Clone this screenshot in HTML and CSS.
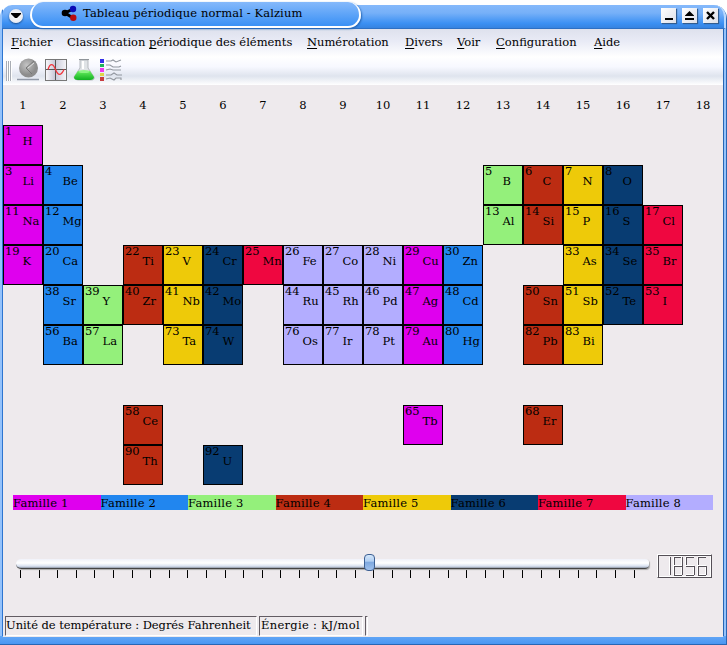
FILE: index.html
```html
<!DOCTYPE html>
<html lang="fr">
<head>
<meta charset="utf-8">
<title>Tableau périodique normal - Kalzium</title>
<link rel="stylesheet" href="styles.css">
</head>
<body>
<div class="window">
  <header class="titlebar">
    <div class="bar"></div>
    <span class="orb"><svg width="10" height="6" viewBox="0 0 10 6"><path d="M0 0h10v1L6 5H4L0 1z"/></svg></span>
    <div class="tab">
      <svg class="logo" width="17" height="17" viewBox="0 0 17 17"><path d="M4 8L12 4M4 8L12 13" stroke="#000" stroke-width="3"/><circle cx="4" cy="8" r="3.300"/><circle cx="12" cy="4" r="3.200" fill="#0a0ab4"/><circle cx="12.300" cy="12.700" r="3.200" fill="#b80c10"/></svg>
      <span class="title">Tableau périodique normal - Kalzium</span>
    </div>
    <div class="controls">
      <span><svg width="15" height="15"><path d="M4 10h8v2H4z"/></svg></span>
      <span><svg width="15" height="15"><path d="M7.500 3L12 7.500V8H3v-.5zM3 10h9v2H3z"/></svg></span>
      <span><svg width="15" height="15"><path d="M4 4l7 7M11 4l-7 7" stroke="#000" stroke-width="2.400"/></svg></span>
    </div>
  </header>
  <nav class="menu">
    <span class="m-file"><u>F</u>ichier</span>
    <span class="m-class">Classification <u>p</u>ériodique des éléments</span>
    <span class="m-num"><u>N</u>umérotation</span>
    <span class="m-div"><u>D</u>ivers</span>
    <span class="m-view"><u>V</u>oir</span>
    <span class="m-conf"><u>C</u>onfiguration</span>
    <span class="m-help"><u>A</u>ide</span>
  </nav>
  <div class="toolbar">
    <i class="grip"></i>
    <svg width="24" height="24" viewBox="0 0 24 24"><defs><radialGradient id="ball" cx=".4" cy=".35"><stop stop-color="#c4c4c4"/><stop offset="1" stop-color="#8d8d8d"/></radialGradient></defs><circle cx="12.500" cy="10" r="9.500" fill="url(#ball)"/><path d="M18 3l-8 7 6 6" fill="none" stroke="#777"/><path d="M18 5l-6 5" stroke="#ddd"/><path d="M1 21.500h22" stroke="#929aa8" stroke-width="1.500"/></svg>
    <svg width="24" height="24" viewBox="0 0 24 24"><defs><linearGradient id="paper"><stop stop-color="#fafafc"/><stop offset=".45" stop-color="#c8c8d8"/><stop offset="1" stop-color="#f6f6fa"/></linearGradient></defs><rect x="1.500" y="1.500" width="21" height="21" fill="url(#paper)" stroke="#777"/><path d="M2 11.500h20M11.500 2v20" stroke="#555"/><path d="M4 11.500C6 5 9 5 11.500 11.500S17 18 20 11.500" fill="none" stroke="#f3343d" stroke-width="1.300"/></svg>
    <svg width="24" height="24" viewBox="0 0 24 24"><defs><linearGradient id="liq" x2="0" y2="1"><stop stop-color="#68ee60"/><stop offset="1" stop-color="#10b020"/></linearGradient></defs><path d="M8 2v8L2 19q0 3 4 3h13q4 0 3-3L16 10V2z" fill="#dfe3e6" stroke="#b5b9be"/><path d="M6 13h12l4 6q0 3-4 3H6q-4 0-4-3z" fill="url(#liq)"/><path d="M7 1.500h10" stroke="#90959a"/><ellipse cx="12" cy="13.500" rx="5.500" ry="1.500" fill="#8cf484"/><path d="M11 3v8" stroke="#fff" stroke-width="2"/></svg>
    <svg width="24" height="24" viewBox="1 0 24 24"><path fill="#3431e8" d="M1 1h4v4H1z"/><path fill="#20b45a" d="M1 6h4v3H1z"/><path fill="#ee38ee" d="M1 10h4v4H1z"/><path fill="#dfd447" d="M1 15h4v3H1z"/><path fill="#c83d40" d="M1 19h4v4H1z"/><path d="M7 3h5l2-1 3 2 5-2M7 7h4l3 2h6l2-1M7 12l4-1 3 1h8M7 17h5l3-2 3 2h5M7 21l4-1 4 2 2-2h5v2" fill="none" stroke="#92979f" stroke-width="1.100"/></svg>
  </div>
  <main class="content">
    <div class="groups" id="groups"></div>
    <div class="table" id="table"></div>
    <div class="legend">
      <span class="f1">Famille 1</span><span class="f2">Famille 2</span><span class="f3">Famille 3</span><span class="f4">Famille 4</span><span class="f5">Famille 5</span><span class="f6">Famille 6</span><span class="f7">Famille 7</span><span class="f8">Famille 8</span>
    </div>
    <div class="range">
      <div class="slider">
        <div class="groove"><i class="knob"></i></div>
        <div class="ticks" id="ticks"></div>
      </div>
      <div class="lcd" id="lcd" role="img" aria-label="1856"></div>
    </div>
  </main>
  <footer class="status">
    <span class="s-temp">Unité de température : Degrés Fahrenheit</span>
    <span class="s-energy">Énergie : kJ/mol</span>
    <span class="s-empty"></span>
  </footer>
</div>
<script src="app.js"></script>
</body>
</html>
```
FILE: styles.css
```css
* { box-sizing: border-box; }
body { margin: 0; background: #fff; color: #000; font: 11.5px/15px "DejaVu Serif", serif; overflow: hidden; }
svg { display: block; flex: none; }
.window { width: 727px; height: 645px; display: flex; flex-direction: column; position: relative; }
.window::before { content: ""; position: absolute; z-index: -1; inset: 5px 0 0; border-radius: 12px 14px 0 0; border: solid #2866b4; border-width: 0 1px 1px 0; background: linear-gradient(#63a7f6, #4a96f2) 0 100% / 100% 8px no-repeat, linear-gradient(90deg, #94c2fb 0 2px, #2d75d0 2px 3px, transparent 3px 723px, #2866b4 723px 724px, #94c2fb 724px); }

.titlebar { height: 29px; position: relative; display: flex; flex: none; }
.bar { position: absolute; z-index: -1; inset: 5px 1px 0 2px; background: linear-gradient(#85b9fb, #76b0f8 35%, #3b90f3 80%, #3683e0); border-bottom: 1px solid #2d70c4; border-radius: 10px 12px 0 0; border-right: 2px solid #b9d9ff; }
.orb { width: 14px; height: 14px; margin: 9px 0 0 9px; border-radius: 50%; background: radial-gradient(#fff, #dce0ea); display: grid; place-items: center; box-shadow: 0 1px 2px #1b4b88; }
.tab { width: 331px; height: 26px; margin: 2px 0 0 7px; border: solid #fff; border-width: 0 2px 2px; border-radius: 14px; background: linear-gradient(#85b9fb, #3990f5); display: flex; align-items: center; padding-left: 29px; box-shadow: 1px 1px 2px #2465b3; }
.logo { margin-top: -1px; }
.title { margin: -2px 0 0 5px; white-space: nowrap; letter-spacing: .11px; }
.controls { margin: 8px 9px 0 auto; display: flex; gap: 6px; }
.controls span { width: 15px; height: 15px; background: linear-gradient(135deg, #fff, #dcdfe8); box-shadow: 1px 1px 1px #315d91; }

.menu { height: 28px; margin: 0 4px 0 3px; padding: 6px 0 0 8px; display: flex; background: linear-gradient(#dee1ed, #e9ebf6 45%, #fff); white-space: nowrap; flex: none; }
.menu u { text-underline-offset: 2px; text-decoration-thickness: 1px; }
.m-file { width: 56px; }
.m-class { width: 240px; }
.m-num { width: 98px; }
.m-div { width: 52px; }
.m-view { width: 39px; }
.m-conf { width: 98px; }
.toolbar { height: 28px; margin: 0 4px 0 3px; padding-left: 3px; display: flex; align-items: center; gap: 4px; background: linear-gradient(#fff, #f7f8ff 35%, #dfe4ee 68%, #fff); flex: none; }
.toolbar svg { margin-top: -2px; }
.grip { width: 6px; height: 20px; background: repeating-linear-gradient(90deg, #a9adb5 0 1px, #fff 1px 2px); }

.content { height: 530px; margin: 0 4px 0 3px; background: #eeeaed; flex: none; }
.groups { height: 40px; padding-top: 13px; display: grid; grid-template-columns: repeat(18, 40px); text-align: center; }
.table { display: grid; grid-template-columns: repeat(18, 40px); grid-template-rows: repeat(9, 40px); }
.cell { border: 1px solid #000; display: flex; flex-direction: column; line-height: 10px; padding: 0 0 0 1px; white-space: nowrap; }
.cell b { font-weight: normal; }
.cell span { margin-left: 17.5px; }
.f1 { background: #df00ee; }
.f2 { background: #2186ef; }
.f3 { background: #94f07b; }
.f4 { background: #bc2c12; }
.f5 { background: #eeca09; }
.f6 { background: #083c72; }
.f7 { background: #ef0740; }
.f8 { background: #b3adff; }
.legend { width: 700px; margin: 10px 0 0 10px; display: grid; grid-template-columns: repeat(8, 1fr); letter-spacing: .2px; }
.legend span { height: 15px; line-height: 16px; }
.range { display: flex; margin: 44px 0 0 13px; }
.slider { width: 633px; padding-top: 5px; }
.groove { height: 10px; border-radius: 5px 4px 4px 5px; background: linear-gradient(#f0f2fa, #fff 45%, #d8e1f1 80%, #8e96a5); border-bottom: 1px solid #444; box-shadow: 1px 1px 1px #aaa; position: relative; }
.knob { position: absolute; left: 348px; top: -5px; width: 11px; height: 17px; border: 1px solid #3c5f93; border-radius: 4px; background: linear-gradient(#d4e7fb, #b2cff2 40%, #7fa9e0 50%, #a0c1ed); }
.ticks { display: flex; justify-content: space-between; width: 615px; margin: 1px 0 0 4px; }
.ticks i { width: 1px; height: 8px; background: #000; }
.lcd { width: 55px; height: 24px; margin-left: 8px; border: 1px solid; border-color: #fff #555057 #555057 #fff; box-shadow: inset 1px 1px #555057, inset -1px -1px #fff; padding: 1px 4px; display: flex; justify-content: flex-end; gap: 2px; }
.digit { width: 10px; height: 20px; display: grid; grid-template: 2px 7px 2px 7px 2px / 2px 6px 2px; }
.digit i { margin: -1px 0; background: linear-gradient(90deg, #fff 50%, #555057 50%); }
.digit .a, .digit .g, .digit .d { margin: 0 -1px; background: linear-gradient(#fff 50%, #555057 50%); }
.digit .a { grid-area: 1/2; }
.digit .g { grid-area: 3/2; }
.digit .d { grid-area: 5/2; }
.digit .f { grid-area: 2/1; }
.digit .e { grid-area: 4/1; }
.digit .b { grid-area: 2/3; }
.digit .c { grid-area: 4/3; }

.status { height: 22px; margin: 0 4px 0 3px; padding: 1px 0 1px 2px; background: #eeeaed; display: flex; gap: 2px; white-space: nowrap; flex: none; }
.status span { height: 20px; border: 1px solid; border-color: #625c63 #fff #fff #625c63; padding: 1px 0 0 1px; }
.status .s-temp { width: 252px; letter-spacing: -.06px; padding-left: 0; }
.status .s-energy { width: 104px; letter-spacing: .3px; }
.status .s-empty { width: 3px; }
```
FILE: app.js
```js
// [atomic number, symbol, column, row, family]
const elements = [
  [1,'H',1,1,1],
  [3,'Li',1,2,1],[4,'Be',2,2,2],[5,'B',13,2,3],[6,'C',14,2,4],[7,'N',15,2,5],[8,'O',16,2,6],
  [11,'Na',1,3,1],[12,'Mg',2,3,2],[13,'Al',13,3,3],[14,'Si',14,3,4],[15,'P',15,3,5],[16,'S',16,3,6],[17,'Cl',17,3,7],
  [19,'K',1,4,1],[20,'Ca',2,4,2],[22,'Ti',4,4,4],[23,'V',5,4,5],[24,'Cr',6,4,6],[25,'Mn',7,4,7],[26,'Fe',8,4,8],[27,'Co',9,4,8],[28,'Ni',10,4,8],[29,'Cu',11,4,1],[30,'Zn',12,4,2],[33,'As',15,4,5],[34,'Se',16,4,6],[35,'Br',17,4,7],
  [38,'Sr',2,5,2],[39,'Y',3,5,3],[40,'Zr',4,5,4],[41,'Nb',5,5,5],[42,'Mo',6,5,6],[44,'Ru',8,5,8],[45,'Rh',9,5,8],[46,'Pd',10,5,8],[47,'Ag',11,5,1],[48,'Cd',12,5,2],[50,'Sn',14,5,4],[51,'Sb',15,5,5],[52,'Te',16,5,6],[53,'I',17,5,7],
  [56,'Ba',2,6,2],[57,'La',3,6,3],[73,'Ta',5,6,5],[74,'W',6,6,6],[76,'Os',8,6,8],[77,'Ir',9,6,8],[78,'Pt',10,6,8],[79,'Au',11,6,1],[80,'Hg',12,6,2],[82,'Pb',14,6,4],[83,'Bi',15,6,5],
  [58,'Ce',4,8,4],[65,'Tb',11,8,1],[68,'Er',14,8,4],
  [90,'Th',4,9,4],[92,'U',6,9,6]
];
const fill = (id, html) => { document.getElementById(id).innerHTML = html; };
fill('groups', Array.from({length: 18}, (_, i) => `<span>${i + 1}</span>`).join(''));
fill('table', elements.map(([n, s, c, r, f]) =>
  `<div class="cell f${f}" style="grid-area:${r}/${c}"><b>${n}</b><span>${s}</span></div>`).join(''));
fill('ticks', '<i></i>'.repeat(34));
// Lit segments of each display digit
fill('lcd', ['bc', 'abcdefg', 'acdfg', 'acdefg'].map(d =>
  `<div class="digit">${[...d].map(s => `<i class="${s}"></i>`).join('')}</div>`).join(''));
```
